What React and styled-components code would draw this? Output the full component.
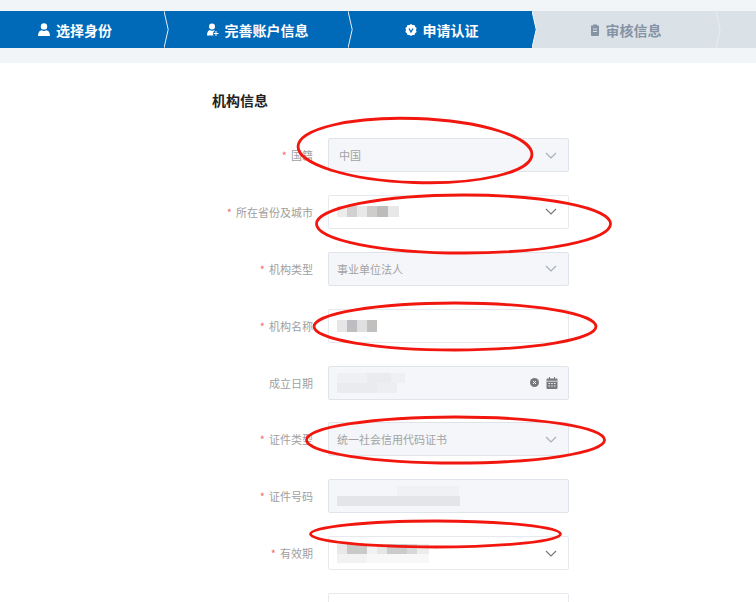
import styled, { createGlobalStyle } from 'styled-components';

const GlobalStyle = createGlobalStyle`
  html, body {
    margin: 0;
    height: 602px;
    overflow: hidden;
    background: #ffffff;
    font-family: "Noto Sans CJK SC", "Liberation Sans", sans-serif;
  }
`;

const Page = styled.div`
  position: relative;
  width: 756px;
  height: 602px;
  overflow: hidden;
`;

const StepBand = styled.div`
  background: #f1f5f8;
  padding: 11px 0 15px;
`;

const StepBar = styled.div`
  display: flex;
  height: 37px;
  overflow: hidden;
`;

const StepItem = styled.div`
  position: relative;
  flex: 0 0 ${p => (p.$first ? '163.5px' : '184px')};
  box-sizing: border-box;
  padding: ${p => (p.$first ? '0 13.5px 0 0' : '0 0 0 4px')};
  display: flex;
  align-items: center;
  justify-content: center;
  gap: 6px;
  background: ${p => (p.$active ? '#0069b8' : '#dae1e7')};
  color: ${p => (p.$active ? '#ffffff' : '#8593a5')};
  font-size: 14px;
  font-weight: 700;
  white-space: nowrap;
`;

const StepArrow = styled.svg`
  position: absolute;
  top: 0;
  right: -5px;
  z-index: 1;
  width: 5px;
  height: 37px;
`;

const Form = styled.div`
  width: 357px;
  margin-left: 212px;
`;

const Heading = styled.h2`
  margin: 0;
  padding-top: 27px;
  height: 75px;
  box-sizing: border-box;
  font-size: 14px;
  line-height: 20px;
  font-weight: 700;
  color: #222222;
`;

const Rows = styled.div`
  display: flex;
  flex-direction: column;
  gap: 22.9px;
`;

const Row = styled.div`
  display: flex;
  align-items: center;
  gap: 15px;
  flex-shrink: 0;
`;

const Label = styled.label`
  flex: 0 0 101px;
  text-align: right;
  font-size: 11px;
  line-height: 34px;
  color: #a0a0a0;
  white-space: nowrap;
`;

const Star = styled.span`
  color: #f26d6d;
  margin-right: 4px;
`;

const Field = styled.div`
  flex: 0 0 241px;
  height: 34px;
  box-sizing: border-box;
  padding: 0 11px 0 8px;
  display: flex;
  align-items: center;
  justify-content: space-between;
  border: 1px solid ${p => (p.$filled ? '#dfe4ea' : '#e6eaee')};
  border-radius: 2px;
  background: ${p => (p.$filled ? '#f4f6fa' : '#ffffff')};
  font-size: 11px;
  color: #a3a3a3;
  white-space: nowrap;
`;

const Mosaic = styled.div`
  display: flex;
  flex-direction: column;
  filter: blur(0.4px);
`;

const MosaicRow = styled.div`
  display: flex;
`;

const MosaicCell = styled.span`
  display: block;
  width: ${p => p.$w}px;
  height: ${p => p.$h}px;
  background: ${p => p.$c};
`;

const Tools = styled.div`
  display: flex;
  align-items: center;
  gap: 7px;
  margin-right: -1px;
`;

const Marks = styled.svg`
  position: absolute;
  inset: 0;
  width: 756px;
  height: 602px;
  pointer-events: none;
`;

const UserIcon = () => (
  <svg width="12" height="13" viewBox="0 0 12 13" fill="currentColor">
    <circle cx="6" cy="3.4" r="3.2" />
    <path d="M0 13c0-3.6 1.6-5.6 3.6-5.8.7.5 1.5.8 2.4.8s1.700-.3 2.400-.8C10.400 7.400 12 9.400 12 13z" />
  </svg>
);

const UserPlusIcon = () => (
  <svg width="12" height="13" viewBox="0 0 12 13" fill="currentColor">
    <circle cx="5" cy="3.400" r="3" />
    <path d="M0 12.500c0-3.300 1.300-5.200 3-5.400.6.400 1.300.7 2 .7s1.400-.3 1.900-.6c.4.100.8.300 1.100.6C6.800 8.400 6 9.500 6 10.700c0 .7.200 1.300.6 1.800z" />
    <path d="M9 8v5M6.700 10.500h4.800" stroke="currentColor" strokeWidth="1" fill="none" />
  </svg>
);

const BadgeIcon = () => (
  <svg width="12" height="12" viewBox="0 0 12 12">
    <path
      fill="currentColor"
      d="M6 0l1.600 1.100 1.900-.1.600 1.800 1.500 1.200L11 6l.6 2-1.500 1.200-.6 1.800-1.900-.1L6 12l-1.600-1.100-1.900.1-.6-1.800L.4 8 1 6 .4 4l1.500-1.200.6-1.800 1.900.1z"
    />
    <path d="M4 4.500L6 8l2-3.500" fill="none" stroke="#0069b8" strokeWidth="1.300" />
  </svg>
);

const ClipboardIcon = () => (
  <svg width="10" height="12" viewBox="0 0 10 12">
    <path
      fill="currentColor"
      d="M1 1.500h2V.5h4v1h2V11a1 1 0 0 1-1 1H2a1 1 0 0 1-1-1z"
    />
    <path d="M3 5h4M3 7.500h4" stroke="#dae1e7" strokeWidth="1" />
  </svg>
);

const Chevron = ({ dark }) => (
  <svg width="12" height="7" viewBox="0 0 12 7" fill="none" stroke={dark ? '#77797c' : '#a9afb8'} strokeWidth="1.200">
    <path d="M1 1l5 5 5-5" />
  </svg>
);

const ClearIcon = () => (
  <svg width="9" height="9" viewBox="0 0 9 9">
    <circle cx="4.500" cy="4.500" r="4.500" fill="#77797c" />
    <path d="M3 3l3 3M6 3L3 6" stroke="#f4f6fa" strokeWidth="1" />
  </svg>
);

const CalendarIcon = () => (
  <svg width="12" height="12" viewBox="0 0 12 12">
    <path fill="#77797c" d="M1.500 1.500H3V0h1v1.500h4V0h1v1.500h1.500A1 1 0 0 1 11.500 2.500V11a1 1 0 0 1-1 1h-9a1 1 0 0 1-1-1V2.500a1 1 0 0 1 1-1z" />
    <path d="M.5 4.200h11" stroke="#f4f6fa" strokeWidth="0.800" />
    <path d="M2.500 6.500h7M2.500 9h7" stroke="#f4f6fa" strokeWidth="1.200" strokeDasharray="1.500 1.200" />
  </svg>
);

const steps = [
  { text: '选择身份', Icon: UserIcon, active: true, first: true },
  { text: '完善账户信息', Icon: UserPlusIcon, active: true },
  { text: '申请认证', Icon: BadgeIcon, active: true },
  { text: '审核信息', Icon: ClipboardIcon },
  { text: '', Icon: null },
];

const rows = [
  { label: '国籍', required: true, filled: true, text: '中国', chevron: true, pad: 2 },
  {
    label: '所在省份及城市',
    required: true,
    chevron: true,
    dark: true,
    mosaic: [{ h: 11, cells: [[10, '#ececec'], [10, '#d2d0d0'], [10, '#e8e8e8'], [10, '#cfcdcb'], [11, '#bdbcbd'], [11, '#e8e8e8']] }],
  },
  { label: '机构类型', required: true, filled: true, text: '事业单位法人', chevron: true },
  {
    label: '机构名称',
    required: true,
    mosaic: [{ h: 12, cells: [[10, '#e6e6e6'], [10, '#bfbdc2'], [10, '#e0e0e0'], [10, '#c2c0be']] }],
  },
  {
    label: '成立日期',
    filled: true,
    tools: true,
    mosaic: [
      { h: 10, cells: [[30, '#eef0f3'], [24, '#e9ebee'], [14, '#eef0f3']] },
      { h: 10, cells: [[40, '#e9ebee'], [20, '#eceef1']] },
    ],
  },
  { label: '证件类型', required: true, filled: true, text: '统一社会信用代码证书', chevron: true },
  {
    label: '证件号码',
    required: true,
    filled: true,
    mosaic: [
      { h: 10, cells: [[60, '#f4f6fa'], [62, '#f0f1f4']] },
      { h: 10, cells: [[123, '#e4e5e8']] },
    ],
  },
  {
    label: '有效期',
    required: true,
    chevron: true,
    dark: true,
    mosaic: [
      { h: 10, cells: [[10, '#e8e8e8'], [20, '#c9c9c7'], [10, '#f2f2f2'], [10, '#e6e6e6'], [20, '#cbcbcb'], [10, '#d8d8d8'], [12, '#ececec']] },
      { h: 9, cells: [[30, '#f2f2f2'], [62, '#f8f8f8']] },
    ],
  },
  { label: '' },
];

const marks = [
  { cx: 415, cy: 150.500, rx: 117, ry: 32, rotate: 2 },
  { cx: 463.500, cy: 224, rx: 147, ry: 29, rotate: 0 },
  { cx: 455, cy: 326.500, rx: 141, ry: 23.500, rotate: 0 },
  { cx: 455.500, cy: 440, rx: 149, ry: 23, rotate: 0 },
  { cx: 435.500, cy: 534, rx: 125, ry: 13, rotate: 0 },
];

function Step({ step, nextActive }) {
  const { text, Icon, active, first } = step;
  return (
    <StepItem $active={active} $first={first}>
      {Icon && <Icon />}
      {text}
      <StepArrow viewBox="0 0 5 37">
        <path d="M0 0L4.200 18.500 0 37z" fill={active ? '#0069b8' : '#dae1e7'} />
        <path d="M0 0L4.200 18.500 0 37" fill="none" stroke={nextActive || !active ? '#e9eef3' : '#f4f7fa'} strokeWidth="1" />
      </StepArrow>
    </StepItem>
  );
}

function FormRow({ row }) {
  const { label, required, filled, text, chevron, dark, mosaic, tools } = row;
  return (
    <Row>
      <Label>
        {required && <Star>*</Star>}
        {label}
      </Label>
      <Field $filled={filled}>
        {text && <span style={row.pad ? { paddingLeft: row.pad } : undefined}>{text}</span>}
        {mosaic && (
          <Mosaic>
            {mosaic.map((line, i) => (
              <MosaicRow key={i}>
                {line.cells.map(([w, c], j) => (
                  <MosaicCell key={j} $w={w} $h={line.h} $c={c} />
                ))}
              </MosaicRow>
            ))}
          </Mosaic>
        )}
        {!text && !mosaic && <span />}
        {chevron && <Chevron dark={dark} />}
        {tools && (
          <Tools>
            <ClearIcon />
            <CalendarIcon />
          </Tools>
        )}
      </Field>
    </Row>
  );
}

export default function App() {
  return (
    <Page>
      <GlobalStyle />
      <StepBand>
        <StepBar>
          {steps.map((step, i) => (
            <Step key={i} step={step} nextActive={steps[i + 1]?.active} />
          ))}
        </StepBar>
      </StepBand>
      <Form>
        <Heading>机构信息</Heading>
        <Rows>
          {rows.map((row, i) => (
            <FormRow key={i} row={row} />
          ))}
        </Rows>
      </Form>
      <Marks viewBox="0 0 756 602" fill="none" stroke="#f2170e" strokeWidth="2.800">
        {marks.map((m, i) => (
          <ellipse key={i} cx={m.cx} cy={m.cy} rx={m.rx} ry={m.ry} transform={`rotate(${m.rotate} ${m.cx} ${m.cy})`} />
        ))}
      </Marks>
    </Page>
  );
}
